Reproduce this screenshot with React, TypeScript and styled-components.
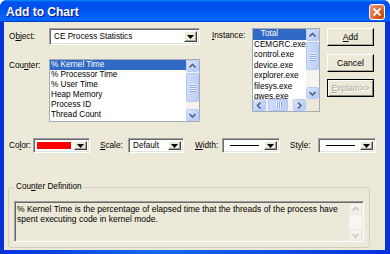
import React from "react";
import styled, { createGlobalStyle } from "styled-components";

const FS = "8.2px";

const Global = createGlobalStyle`
  html, body { margin: 0; padding: 0; background: #fff; }
  body { font-family: "Liberation Sans", Arial, sans-serif; font-size: ${FS}; color: #000; }
  * { box-sizing: border-box; }
`;

const Window = styled.div`
  width: 390px;
  height: 254px;
  display: flex;
  flex-direction: column;
  background: linear-gradient(to right, #0831D9 0%, #166AEE 40%, #0831D9 100%);
  border-radius: 7px 7px 0 0;
  overflow: hidden;
`;

const TitleBar = styled.div`
  height: 22px;
  flex: none;
  display: flex;
  align-items: center;
  padding: 0 5px 0 6px;
  background: linear-gradient(to bottom, #0997ff 0%, #0053ee 8%, #0050ee 40%, #0066ff 88%, #0066ff 93%, #005bff 95%, #003dd7 96%, #003dd7 100%);
`;

const Title = styled.div`
  flex: 1;
  color: #fff;
  font-family: "Liberation Sans", Arial, sans-serif;
  font-weight: bold;
  font-size: 12px;
  text-shadow: 1px 1px 0 #0f1089;
  padding-top: 1px;
`;

const CloseBtn = styled.div`
  width: 16px;
  height: 16px;
  border: 1px solid #fff;
  border-radius: 3px;
  background: radial-gradient(circle at 80% 80%, #cc4600 0%, #dc6527 40%, #e5805a 70%, #f0a58a 100%);
  display: flex;
  align-items: center;
  justify-content: center;
  margin-top: 1px;
`;

const Client = styled.div`
  flex: 1;
  margin: 0 5px 4px 4px;
  background: #ece9d8;
  display: flex;
  flex-direction: column;
`;

const TopSection = styled.div`
  display: flex;
  padding: 6px 0 0 5px;
`;

const LeftCol = styled.div`
  width: 191px;
  display: flex;
  flex-direction: column;
  gap: 14px;
`;

const FieldRow = styled.div<{ $align?: string }>`
  display: flex;
  align-items: ${(p) => p.$align || "center"};
`;

const Label = styled.div<{ $w: number; $ml?: number; $pt?: number }>`
  width: ${(p) => p.$w}px;
  margin-left: ${(p) => p.$ml || 0}px;
  padding-top: ${(p) => p.$pt || 0}px;
  font-size: ${FS};
  line-height: 10px;
  white-space: nowrap;
  flex: none;
`;

const U = styled.span`
  text-decoration: underline;
`;

const Combo = styled.div<{ $w: number; $h: number }>`
  width: ${(p) => p.$w}px;
  height: ${(p) => p.$h}px;
  flex: none;
  display: flex;
  align-items: center;
  background: #fff;
  border: 1px solid;
  border-color: #a0a0a0 #fff #fff #a0a0a0;
  box-shadow: inset 1px 1px 0 #696969, inset -1px -1px 0 #e3e3e3;
  padding: 2px;
`;

const ComboText = styled.div`
  flex: 1;
  padding-left: 2px;
  font-size: ${FS};
  line-height: 10px;
  white-space: nowrap;
  overflow: hidden;
`;

const DropBtn = styled.div`
  width: 13px;
  align-self: stretch;
  flex: none;
  background: #ece9d8;
  border: 1px solid;
  border-color: #fff #404040 #404040 #fff;
  box-shadow: inset -1px -1px 0 #aca899;
  display: flex;
  align-items: center;
  justify-content: center;
`;

const Swatch = styled.div`
  flex: 1;
  align-self: stretch;
  margin: 1px 3px 1px 1px;
  background: #ff0000;
`;

const LineSample = styled.div`
  flex: 1;
  display: flex;
  justify-content: center;
`;

const LineBar = styled.div`
  width: 29px;
  height: 1px;
  background: #000;
`;

const ListBox = styled.div<{ $w: number; $h: number }>`
  width: ${(p) => p.$w}px;
  height: ${(p) => p.$h}px;
  flex: none;
  background: #fff;
  border: 1px solid #a5acb5;
  display: grid;
  grid-template-columns: 1fr 13px;
  grid-template-rows: minmax(0, 1fr) auto;
  overflow: hidden;
`;

const Items = styled.div`
  overflow: hidden;
`;

const Item = styled.div<{ $sel?: boolean; $h?: number }>`
  height: ${(p) => p.$h || 10}px;
  line-height: ${(p) => p.$h || 10}px;
  font-size: ${FS};
  padding-left: 1px;
  white-space: nowrap;
  color: ${(p) => (p.$sel ? "#fff" : "#000")};
  background: ${(p) => (p.$sel ? "#316ac5" : "transparent")};
`;

const VScroll = styled.div<{ $disabled?: boolean }>`
  display: flex;
  flex-direction: column;
  background: ${(p) => (p.$disabled ? "#f7f6f2" : "#f5f4ef")};
`;

const ScrollBtn = styled.div<{ $disabled?: boolean; $w?: number; $h?: number }>`
  width: ${(p) => p.$w || 13}px;
  height: ${(p) => p.$h || 12}px;
  flex: none;
  border: 1px solid ${(p) => (p.$disabled ? "#e9e8e1" : "#b8cbf5")};
  border-radius: 2px;
  background: ${(p) =>
    p.$disabled
      ? "linear-gradient(#f6f5f0, #eeede6)"
      : "linear-gradient(135deg, #dbe6fd 0%, #c4d5fb 55%, #b3c8f7 100%)"};
  display: flex;
  align-items: center;
  justify-content: center;
`;

const Thumb = styled.div<{ $h?: number; $w?: number }>`
  height: ${(p) => (p.$h ? p.$h + "px" : "auto")};
  width: ${(p) => (p.$w ? p.$w + "px" : "auto")};
  flex: none;
  border: 1px solid #b3c6f3;
  border-radius: 2px;
  background: linear-gradient(to right, #cfdcfc, #bed0f9);
  display: flex;
  align-items: center;
  justify-content: center;
`;

const Grip = styled.div<{ $vertical?: boolean }>`
  display: flex;
  flex-direction: ${(p) => (p.$vertical ? "row" : "column")};
  gap: 1px;
`;

const GripLine = styled.div<{ $vertical?: boolean }>`
  width: ${(p) => (p.$vertical ? "1px" : "6px")};
  height: ${(p) => (p.$vertical ? "6px" : "1px")};
  background: #eef3fe;
  box-shadow: ${(p) => (p.$vertical ? "1px 0 0 #8faaeb" : "0 1px 0 #8faaeb")};
`;

const Track = styled.div`
  flex: 1;
`;

const Spacer = styled.div<{ $w?: number; $h?: number }>`
  flex: none;
  width: ${(p) => p.$w || 0}px;
  height: ${(p) => p.$h || 0}px;
`;

const HScroll = styled.div`
  height: 12px;
  display: flex;
  background: #f5f4ef;
`;

const Corner = styled.div`
  background: #ece9d8;
`;

const InstanceCol = styled.div`
  margin-left: 12px;
  display: flex;
  align-items: flex-start;
`;

const ButtonCol = styled.div`
  margin-left: 7px;
  display: flex;
  flex-direction: column;
  gap: 8px;
`;

const Button = styled.div<{ $default?: boolean; $disabled?: boolean; $mt?: number }>`
  width: 47px;
  height: 18px;
  margin-top: ${(p) => p.$mt || 0}px;
  display: flex;
  align-items: center;
  justify-content: center;
  font-size: 8.6px;
  background: #ece9d8;
  color: ${(p) => (p.$disabled ? "#aca899" : "#000")};
  text-shadow: ${(p) => (p.$disabled ? "1px 1px 0 #fff" : "none")};
  border: 1px solid ${(p) => (p.$default ? "#000" : "#fff")};
  border-right-color: #000;
  border-bottom-color: #000;
  box-shadow: ${(p) =>
    p.$default
      ? "inset 1px 1px 0 #fff, inset -1px -1px 0 #808080"
      : "inset -1px -1px 0 #aca899"};
`;

const OptionsRow = styled.div`
  display: flex;
  align-items: center;
  padding-left: 5px;
  margin-top: 16px;
`;

const Group = styled.div`
  position: relative;
  margin: 34px 0 0 4px;
  width: 362px;
  border: 1px solid #d0d0bf;
  border-radius: 3px;
  padding: 13px 5px 5px 5px;
`;

const Legend = styled.div`
  position: absolute;
  top: -6px;
  left: 5px;
  padding: 0 2px;
  background: #ece9d8;
  font-size: ${FS};
  line-height: 10px;
`;

const TextBox = styled.div`
  height: 41px;
  display: flex;
  border: 1px solid;
  border-color: #a0a0a0 #fff #fff #a0a0a0;
  box-shadow: inset 1px 1px 0 #696969;
  background: #ece9d8;
  padding: 1px 1px 0 2px;
`;

const DefText = styled.div`
  flex: 1;
  font-size: 8.5px;
  line-height: 10px;
  padding-top: 1px;
`;

const Chevron = ({ dir, color }: { dir: "up" | "down" | "left" | "right"; color: string }) => {
  const d = {
    up: "M1.5 5.5 L4.5 2.5 L7.5 5.5",
    down: "M1.5 3 L4.5 6 L7.5 3",
    left: "M5.5 1.5 L2.5 4.5 L5.5 7.5",
    right: "M3 1.5 L6 4.5 L3 7.5",
  }[dir];
  return (
    <svg width="9" height="9" viewBox="0 0 9 9">
      <path d={d} fill="none" stroke={color} strokeWidth="1.6" />
    </svg>
  );
};

const DownTri = () => (
  <svg width="7" height="4" viewBox="0 0 7 4">
    <path d="M0 0 H7 L3.5 4 Z" fill="#000" />
  </svg>
);

const ScrollV = ({ thumb, gap, disabled }: { thumb?: number; gap?: number; disabled?: boolean }) => {
  const arrow = disabled ? "#c9c7ba" : "#4d6185";
  return (
    <VScroll $disabled={disabled}>
      <ScrollBtn $disabled={disabled}>
        <Chevron dir="up" color={arrow} />
      </ScrollBtn>
      {thumb ? (
        <>
          <Spacer $h={gap || 1} />
          <Thumb $h={thumb}>
            <Grip>
              <GripLine />
              <GripLine />
              <GripLine />
              <GripLine />
            </Grip>
          </Thumb>
        </>
      ) : null}
      <Track />
      <ScrollBtn $disabled={disabled}>
        <Chevron dir="down" color={arrow} />
      </ScrollBtn>
    </VScroll>
  );
};

const counters = ["% Kernel Time", "% Processor Time", "% User Time", "Heap Memory", "Process ID", "Thread Count"];
const instances = ["_Total", "CEMGRC.exe", "control.exe", "device.exe", "explorer.exe", "filesys.exe", "gwes.exe"];

export default function App() {
  return (
    <>
      <Global />
      <Window>
        <TitleBar>
          <Title>Add to Chart</Title>
          <CloseBtn>
            <svg width="10" height="10" viewBox="0 0 10 10">
              <path d="M1.5 1.5 L8.5 8.5 M8.5 1.5 L1.5 8.5" stroke="#fff" strokeWidth="1.8" />
            </svg>
          </CloseBtn>
        </TitleBar>
        <Client>
          <TopSection>
            <LeftCol>
              <FieldRow>
                <Label $w={40}>
                  O<U>b</U>ject:
                </Label>
                <Combo $w={151} $h={17}>
                  <ComboText>CE Process Statistics</ComboText>
                  <DropBtn>
                    <DownTri />
                  </DropBtn>
                </Combo>
              </FieldRow>
              <FieldRow $align="flex-start">
                <Label $w={40} $pt={2}>
                  Cou<U>n</U>ter:
                </Label>
                <ListBox $w={151} $h={63}>
                  <Items>
                    {counters.map((c, i) => (
                      <Item key={c} $sel={i === 0}>
                        {c}
                      </Item>
                    ))}
                  </Items>
                  <ScrollV thumb={29} />
                </ListBox>
              </FieldRow>
            </LeftCol>
            <InstanceCol>
              <Label $w={40} $pt={3}>
                <U>I</U>nstance:
              </Label>
              <ListBox $w={68} $h={84}>
                <Items>
                  {instances.map((c, i) => (
                    <Item key={c} $sel={i === 0} $h={10.5}>
                      {i === 0 ? "\u00a0\u00a0\u00a0Total" : c}
                    </Item>
                  ))}
                </Items>
                <ScrollV thumb={28} gap={1} />
                <HScroll>
                  <ScrollBtn $w={13}>
                    <Chevron dir="left" color="#4d6185" />
                  </ScrollBtn>
                  <Spacer $w={2} />
                  <Thumb $w={20}>
                    <Grip $vertical>
                      <GripLine $vertical />
                      <GripLine $vertical />
                      <GripLine $vertical />
                    </Grip>
                  </Thumb>
                  <Track />
                  <ScrollBtn $w={13}>
                    <Chevron dir="right" color="#4d6185" />
                  </ScrollBtn>
                </HScroll>
                <Corner />
              </ListBox>
            </InstanceCol>
            <ButtonCol>
              <Button>
                <span>
                  <U>A</U>dd
                </span>
              </Button>
              <Button>Cancel</Button>
              <Button $default $disabled $mt={-1}>
                <span>
                  <U>E</U>xplain&gt;&gt;
                </span>
              </Button>
            </ButtonCol>
          </TopSection>
          <OptionsRow>
            <Label $w={24}>
              Co<U>l</U>or:
            </Label>
            <Combo $w={57} $h={15}>
              <Swatch />
              <DropBtn>
                <DownTri />
              </DropBtn>
            </Combo>
            <Label $w={28} $ml={10}>
              <U>S</U>cale:
            </Label>
            <Combo $w={56} $h={15}>
              <ComboText>Default</ComboText>
              <DropBtn>
                <DownTri />
              </DropBtn>
            </Combo>
            <Label $w={27} $ml={11}>
              <U>W</U>idth:
            </Label>
            <Combo $w={58} $h={15}>
              <LineSample>
                <LineBar />
              </LineSample>
              <DropBtn>
                <DownTri />
              </DropBtn>
            </Combo>
            <Label $w={28} $ml={10}>
              St<U>y</U>le:
            </Label>
            <Combo $w={58} $h={15}>
              <LineSample>
                <LineBar />
              </LineSample>
              <DropBtn>
                <DownTri />
              </DropBtn>
            </Combo>
          </OptionsRow>
          <Group>
            <Legend>
              Cou<U>n</U>ter Definition
            </Legend>
            <TextBox>
              <DefText>
                % Kernel Time is the percentage of elapsed time that the threads of the process have spent
                executing code in kernel mode.
              </DefText>
              <ScrollV disabled />
            </TextBox>
          </Group>
        </Client>
      </Window>
    </>
  );
}
